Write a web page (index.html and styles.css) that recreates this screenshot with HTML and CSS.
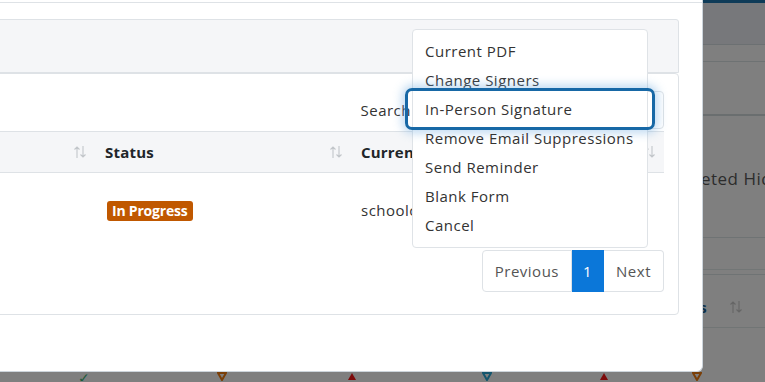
FILE: index.html
```html
<!DOCTYPE html>
<html lang="en">
<head>
  <meta charset="UTF-8" />
  <title>Documents</title>
  <link rel="stylesheet" href="styles.css">
</head>
<body>
  <div class="app">
    <div class="app-topbar"></div>
    <div class="app-nav"></div>
    <div class="app-tabs"></div>
    <div class="app-filters"></div>
    <div class="app-notice"><span>Show Completed Hidden</span></div>
    <div class="app-toolbar"></div>
    <div class="app-thead">
      <b>Actions</b>
      <svg class="app-sort" width="14" height="14" viewBox="0 0 14 14"><path d="M4 13V2M1.5 4.5L4 2l2.5 2.5M10 1v11M7.5 9.5L10 12l2.5-2.5" fill="none" stroke="#666" stroke-width="1.1"/></svg>
    </div>
    <div class="app-space"></div>
    <div class="app-icons">
      <span class="ico-check">✓</span>
      <span><svg width="10" height="9" viewBox="0 0 10 9"><path d="M1 1h8L5 8z" fill="none" stroke="#7a3f08" stroke-width="2"/></svg></span>
      <span><svg width="10" height="9" viewBox="0 0 10 9"><path d="M5 1l4 7H1z" fill="#7d0b0b"/></svg></span>
      <span><svg width="10" height="9" viewBox="0 0 10 9"><path d="M1 1h8L5 8z" fill="none" stroke="#14566e" stroke-width="2"/></svg></span>
      <span><svg width="10" height="9" viewBox="0 0 10 9"><path d="M5 1l4 7H1z" fill="#7d0b0b"/></svg></span>
      <span><svg width="10" height="9" viewBox="0 0 10 9"><path d="M1 1h8L5 8z" fill="none" stroke="#7a3f08" stroke-width="2"/></svg></span>
    </div>
  </div>

  <div class="modal">
    <div class="modal-head"></div>
    <div class="modal-body">
      <div class="card-head"></div>
      <div class="card-body">
        <div class="search-row">
          <label for="q">Search</label>
          <input id="q" type="text">
        </div>
        <table class="doc-table">
          <thead>
            <tr>
              <th class="col-a"><div class="th-in"><span></span><svg class="sort" width="14" height="14" viewBox="0 0 14 14"><path d="M4 13V2M1.5 4.5L4 2l2.5 2.5M10 1v11M7.5 9.5L10 12l2.5-2.5"/></svg></div></th>
              <th class="col-b"><div class="th-in"><span>Status</span><svg class="sort" width="14" height="14" viewBox="0 0 14 14"><path d="M4 13V2M1.5 4.5L4 2l2.5 2.5M10 1v11M7.5 9.5L10 12l2.5-2.5"/></svg></div></th>
              <th class="col-c"><div class="th-in"><span>Current Signer</span><svg class="sort" width="14" height="14" viewBox="0 0 14 14"><path d="M4 13V2M1.5 4.5L4 2l2.5 2.5M10 1v11M7.5 9.5L10 12l2.5-2.5"/></svg></div></th>
            </tr>
          </thead>
          <tbody>
            <tr>
              <td></td>
              <td><span class="badge">In Progress</span></td>
              <td>schoolcounselor@district.org</td>
            </tr>
          </tbody>
        </table>
        <div class="pager">
          <a href="#">Previous</a>
          <a href="#" class="active">1</a>
          <a href="#">Next</a>
        </div>
      </div>
    </div>

    <div class="menu">
      <a href="#">Current PDF</a>
      <a href="#">Change Signers</a>
      <a href="#" class="focused">In-Person Signature</a>
      <a href="#">Remove Email Suppressions</a>
      <a href="#">Send Reminder</a>
      <a href="#">Blank Form</a>
      <a href="#">Cancel</a>
    </div>
  </div>
</body>
</html>
```

FILE: styles.css
```css
html, body {
  margin: 0;
  padding: 0;
  font-family: 'Open Sans', sans-serif;
  font-size: 15px;
  letter-spacing: 0.5px;
  color: #333;
  background: #7f7f7f;
  overflow: hidden;
}
*, *::before, *::after {
  box-sizing: border-box;
}

/* background page, drawn already dimmed */
.app {
  width: 765px;
  height: 382px;
  display: flex;
  flex-direction: column;
}
.app-topbar {
  height: 3px;
  background: #0e3b58;
}
.app-nav {
  height: 42px;
  background: #77787b;
  border-bottom: 1px solid #6c7072;
}
.app-tabs {
  height: 17px;
  border-bottom: 1px solid #6e7273;
}
.app-filters {
  height: 54px;
  border-bottom: 2px solid #6a6e6f;
}
.app-notice {
  height: 122px;
  display: flex;
  align-items: center;
  padding-left: 597px;
  padding-top: 4px;
  font-size: 17px;
  color: #2c2c2c;
  white-space: nowrap;
  border-bottom: 1px solid #6f7374;
}
.app-toolbar {
  margin-top: 31px;
  height: 6px;
  border-top: 1px solid #727676;
  border-bottom: 1px solid #6f7374;
}
.app-thead {
  height: 53px;
  display: flex;
  align-items: flex-end;
  padding: 0 0 10px 648px;
  gap: 22px;
  border-bottom: 1px solid #717575;
  font-size: 15px;
  color: #0d2f4a;
  white-space: nowrap;
}
.app-sort {
  margin-bottom: 3px;
}
.app-space {
  height: 43px;
}
.app-icons {
  height: 10px;
  display: grid;
  grid-template-columns: 139px 130px 135px 117px 93px 1fr;
  padding-left: 78px;
  align-items: start;
  line-height: 1;
}
.app-icons span {
  display: block;
  height: 10px;
  overflow: hidden;
}
.app-icons svg {
  display: block;
  margin-top: 1px;
}
.ico-check {
  color: #1c5a3a;
  font-size: 14px;
}

/* modal */
.modal {
  position: absolute;
  left: 0;
  top: 0;
  width: 703px;
  height: 372px;
  background: #fff;
  border-right: 1px solid #cdd5dc;
  border-bottom: 1px solid #cdd5dc;
  border-radius: 0 0 6px 0;
}
.modal-head {
  height: 3px;
  border-bottom: 1px solid #dee2e6;
}
.modal-body {
  padding: 16px 23px 0 0;
}
.card-head {
  height: 54px;
  margin-left: -10px;
  background: #f5f6f8;
  border: 1px solid #dee2e6;
  border-radius: 0 3px 0 0;
}
.card-body {
  margin-left: -10px;
  height: 242px;
  border: 1px solid #dee2e6;
  border-radius: 0 4px 4px 0;
  padding: 0 14px 0 0;
}

.search-row {
  display: flex;
  justify-content: flex-end;
  align-items: center;
  gap: 5px;
  padding-top: 17px;
  margin-bottom: 2px;
}
.search-row label {
  color: #333;
}
.search-row input {
  width: 248px;
  height: 38px;
  border: 1px solid #dee2e6;
  border-radius: 4px;
}

.doc-table {
  width: 100%;
  border-collapse: collapse;
  table-layout: fixed;
}
.col-a { width: 101px; }
.col-b { width: 256px; }
.doc-table th {
  height: 41px;
  padding: 0 5px 0 13px;
  background: #f5f6f8;
  border-top: 1px solid #dee2e6;
  border-bottom: 1px solid #dee2e6;
  text-align: left;
  font-weight: 700;
  letter-spacing: 0.2px;
  color: #212529;
  white-space: nowrap;
}
.th-in {
  display: flex;
  justify-content: space-between;
  align-items: center;
}
.sort {
  fill: none;
  stroke: #c2c6ca;
  stroke-width: 1.1;
}
.col-c .sort { margin-right: 3px; }
.doc-table td {
  height: 75px;
  padding: 0 13px;
  vertical-align: middle;
  white-space: nowrap;
  overflow: hidden;
  color: #333;
}
.badge {
  display: inline-block;
  margin-left: 2px;
  padding: 0 5px;
  height: 20px;
  line-height: 20px;
  background: #c05800;
  color: #fff;
  font-size: 14px;
  font-weight: 700;
  letter-spacing: -0.2px;
  border-radius: 3px;
}

.pager {
  display: flex;
  justify-content: flex-end;
  margin-top: 2px;
}
.pager a {
  height: 42px;
  line-height: 40px;
  padding: 0 12px;
  border: 1px solid #dee2e6;
  color: #555;
  text-decoration: none;
}
.pager a + a {
  border-left: none;
}
.pager a:first-child {
  border-radius: 4px 0 0 4px;
}
.pager a:last-child {
  border-radius: 0 4px 4px 0;
}
.pager a.active {
  background: #0b77d9;
  border-color: #0b77d9;
  color: #fff;
  padding: 0 11px;
}

/* actions dropdown */
.menu {
  position: absolute;
  left: 412px;
  top: 29px;
  width: 236px;
  padding: 7px 0;
  background: #fff;
  border: 1px solid #dfe3e7;
  border-radius: 4px;
  display: flex;
  flex-direction: column;
}
.menu a {
  position: relative;
  height: 29px;
  line-height: 29px;
  padding: 0 12px;
  color: #333;
  text-decoration: none;
  white-space: nowrap;
}
.menu a.focused::after {
  content: "";
  position: absolute;
  top: -7px;
  bottom: -6px;
  left: -8px;
  right: -8px;
  border: 3px solid #1768a6;
  border-radius: 7px;
  box-shadow: 0 0 10px 3px rgba(110, 170, 225, 0.45);
}
```
